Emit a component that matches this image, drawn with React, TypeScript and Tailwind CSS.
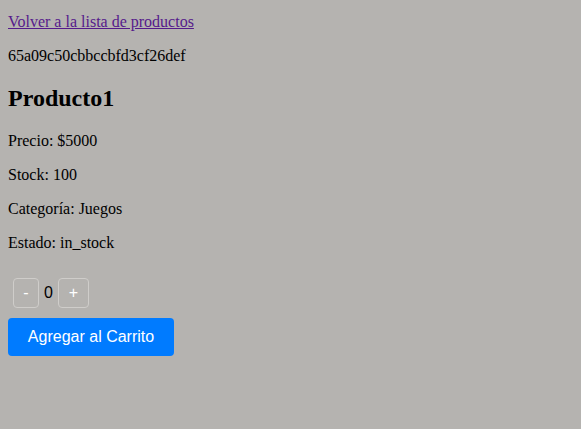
export default function App() {
  return (
    <div className="min-h-[429px] bg-[#b5b3b0] px-2 pt-[13px] font-['Liberation_Serif',serif] text-[16px] leading-[normal] text-black">
      {/* Back link */}
      <a href="#" className="text-[#551a8b] underline">
        Volver a la lista de productos
      </a>

      <p className="my-4">65a09c50cbbccbfd3cf26def</p>

      <h2 className="my-5 text-[24px] leading-[normal] font-bold">Producto1</h2>
      <p className="my-4">Precio: $5000</p>
      <p className="my-4">Stock: 100</p>
      <p className="my-4">Categoría: Juegos</p>
      <p className="my-4">Estado: in_stock</p>

      {/* Quantity */}
      <div className="mt-[26px] flex items-center">
        <button className="mx-[5px] h-[30px] w-[26px] rounded border border-[#cfcdca] font-['Liberation_Sans',sans-serif] text-[16px] text-white">
          -
        </button>
        <span className="font-['Liberation_Sans',sans-serif]">0</span>
        <button className="mx-[5px] h-[30px] w-[31px] rounded border border-[#cfcdca] font-['Liberation_Sans',sans-serif] text-[16px] text-white">
          +
        </button>
      </div>

      <button className="mt-[10px] h-[38px] w-[166px] rounded bg-[#007bff] font-['Liberation_Sans',sans-serif] text-[16px] text-white">
        Agregar al Carrito
      </button>
    </div>
  );
}
